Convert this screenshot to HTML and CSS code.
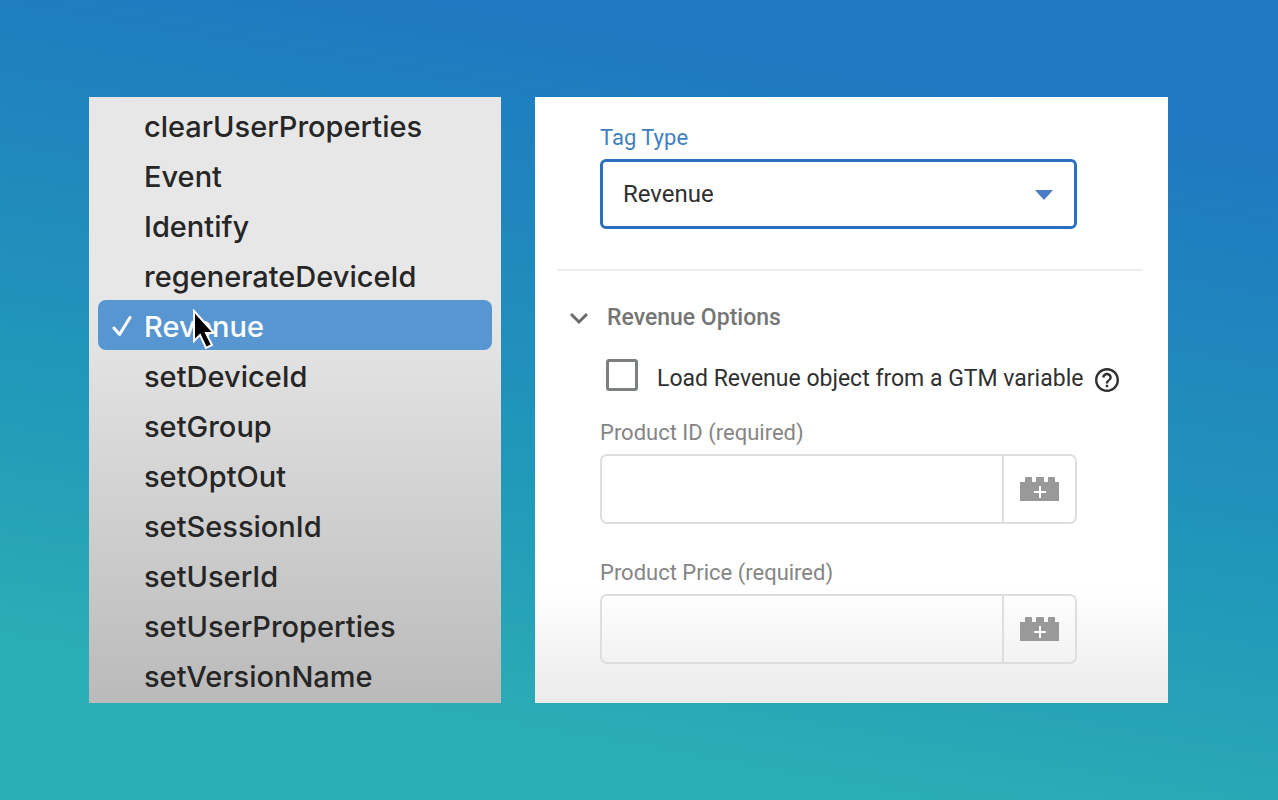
FILE: index.html
```
<!DOCTYPE html>
<html lang="en">
<head>
    <meta charset="UTF-8">
    <meta name="viewport" content="width=device-width, initial-scale=1.0">
    <title>Tag Type: Revenue</title>
    <link rel="stylesheet" href="styles.css">
</head>
<body>
    <main class="stage">
        <ul class="menu">
            <li><button class="menu-item">clearUserProperties</button></li>
            <li><button class="menu-item">Event</button></li>
            <li><button class="menu-item">Identify</button></li>
            <li><button class="menu-item">regenerateDeviceId</button></li>
            <li class="current">
                <button class="menu-item selected">
                    <svg class="check" viewBox="0 0 20 22" aria-hidden="true"><path d="M2 13l5.500 6.500L18 2.500"/></svg>
                    Revenue
                </button>
                <svg class="cursor" viewBox="0 0 24 42" aria-hidden="true"><path d="M2 2v30l6-6 6 13 6-3-6-12h8z"/></svg>
            </li>
            <li><button class="menu-item">setDeviceId</button></li>
            <li><button class="menu-item">setGroup</button></li>
            <li><button class="menu-item">setOptOut</button></li>
            <li><button class="menu-item">setSessionId</button></li>
            <li><button class="menu-item">setUserId</button></li>
            <li><button class="menu-item">setUserProperties</button></li>
            <li><button class="menu-item">setVersionName</button></li>
        </ul>

        <form class="panel">
            <div class="field tag-type">
                <label for="tag-type">Tag Type</label>
                <div class="select-box">
                    <select id="tag-type">
                        <option>clearUserProperties</option>
                        <option>Event</option>
                        <option>Identify</option>
                        <option selected>Revenue</option>
                    </select>
                    <svg class="arrow" viewBox="0 0 18 10" aria-hidden="true"><path d="M0 0h18L9 10z"/></svg>
                </div>
            </div>

            <hr>

            <h2>
                <svg class="chevron" viewBox="0 0 18 12" aria-hidden="true"><path d="M1 2l8 8 8-8"/></svg>
                Revenue Options
            </h2>

            <div class="option">
                <input type="checkbox" id="load-object">
                <label for="load-object">Load Revenue object from a GTM variable</label>
                <button type="button" class="help" aria-label="Help">
                    <svg viewBox="2 2 20 20" aria-hidden="true"><path d="M11 18h2v-2h-2v2zm1-16C6.480 2 2 6.480 2 12s4.480 10 10 10 10-4.480 10-10S17.520 2 12 2zm0 18c-4.410 0-8-3.590-8-8s3.590-8 8-8 8 3.590 8 8-3.590 8-8 8zm0-14c-2.210 0-4 1.790-4 4h2c0-1.100.9-2 2-2s2 .9 2 2c0 2-3 1.750-3 5h2c0-2.250 3-2.500 3-5 0-2.210-1.790-4-4-4z"/></svg>
                </button>
            </div>

            <div class="field">
                <label for="product-id">Product ID (required)</label>
                <div class="input-box">
                    <input type="text" id="product-id">
                    <button type="button" aria-label="Choose a variable for Product ID">
                        <svg class="brick" viewBox="0 0 40 24" aria-hidden="true"><path class="shape" d="M0 5h5V1q0-1 1-1h5q1 0 1 1v4h4V1q0-1 1-1h6q1 0 1 1v4h4V1q0-1 1-1h5q1 0 1 1v4h4v19H0z"/><path class="plus" d="M20 9v12M14 15h12"/></svg>
                    </button>
                </div>
            </div>

            <div class="field">
                <label for="product-price">Product Price (required)</label>
                <div class="input-box">
                    <input type="text" id="product-price">
                    <button type="button" aria-label="Choose a variable for Product Price">
                        <svg class="brick" viewBox="0 0 40 24" aria-hidden="true"><path class="shape" d="M0 5h5V1q0-1 1-1h5q1 0 1 1v4h4V1q0-1 1-1h6q1 0 1 1v4h4V1q0-1 1-1h5q1 0 1 1v4h4v19H0z"/><path class="plus" d="M20 9v12M14 15h12"/></svg>
                    </button>
                </div>
            </div>
        </form>
    </main>
</body>
</html>
```
FILE: styles.css
```
* {
    box-sizing: border-box;
}
body {
    margin: 0;
    min-height: 100vh;
    font-family: Roboto, sans-serif;
    background: linear-gradient(190deg, #1f78c1 14%, #2199b9 60%, #2badb5 84%);
}
button, input, select {
    margin: 0;
    padding: 0;
    border: none;
    background: none;
    font: inherit;
    color: inherit;
}
.stage {
    display: grid;
    grid-template-columns: 412fr 633fr;
    gap: 34px;
    padding: 97px 110px 96px 89px;
}

/* Dropdown list */
.menu {
    margin: 0;
    padding: 3px 9px;
    list-style: none;
    font-family: Inter, sans-serif;
    font-size: 29px;
    font-weight: 500;
    color: #262626;
    background: linear-gradient(#e7e7e7 35%, #d8d8d8 57%, #bababa);
}
.menu-item {
    display: flex;
    align-items: center;
    gap: 12px;
    width: 100%;
    height: 50px;
    padding: 2px 14px 0 46px;
    text-align: left;
}
.menu-item.selected {
    padding-left: 14px;
    color: #fff;
    background: #5896d1;
    border-radius: 8px;
}
.current {
    position: relative;
}
.check {
    width: 20px;
    height: 22px;
    fill: none;
    stroke: #fff;
    stroke-width: 3;
    stroke-linecap: round;
    stroke-linejoin: round;
}
.cursor {
    position: absolute;
    top: 9px;
    left: 94px;
    width: 24px;
    height: 42px;
    fill: #000;
    stroke: #fff;
    stroke-width: 2;
}

/* Tag settings */
.panel {
    padding: 27px 25px 39px 22px;
    color: #303030;
    font-size: 24px;
    background: linear-gradient(#fff 81%, #ebebeb);
}
.field {
    margin: 0 66px 35px 43px;
}
.field:last-child {
    margin-bottom: 0;
}
.field label {
    display: block;
    margin-bottom: 7px;
    font-size: 22px;
    line-height: 28px;
    color: #858585;
}
.tag-type {
    margin-bottom: 40px;
}
.tag-type label {
    color: #3f80c0;
}
.select-box {
    position: relative;
}
.select-box select {
    display: block;
    width: 100%;
    height: 70px;
    padding: 0 60px 0 20px;
    appearance: none;
    border: 3px solid #2a70bd;
    border-radius: 6px;
}
.arrow {
    position: absolute;
    top: 31px;
    right: 24px;
    width: 18px;
    height: 10px;
    fill: #4b7cc4;
    pointer-events: none;
}
hr {
    width: 100%;
    height: 2px;
    margin: 0;
    border: none;
    background: #ededed;
}
h2 {
    display: flex;
    align-items: center;
    gap: 19px;
    margin: 33px 0 27px 13px;
    font-size: 23px;
    font-weight: 500;
    line-height: 28px;
    color: #757575;
}
.chevron {
    width: 18px;
    height: 12px;
    fill: none;
    stroke: #6b6b6b;
    stroke-width: 3;
}
.option {
    display: flex;
    align-items: center;
    height: 32px;
    margin: 0 0 28px 49px;
}
.option input {
    width: 32px;
    height: 32px;
    margin-right: 19px;
    appearance: none;
    border: 3px solid #7d8080;
    border-radius: 3px;
}
.option label {
    padding-top: 6px;
    font-size: 23px;
    white-space: nowrap;
}
.help {
    width: 24px;
    height: 24px;
    margin: 10px 0 0 12px;
}
.help svg {
    display: block;
    fill: #303030;
}
.input-box {
    display: flex;
    height: 70px;
    border: 2px solid #dedede;
    border-radius: 7px;
}
.input-box input {
    flex: 1;
    min-width: 0;
    padding: 0 20px;
}
.input-box button {
    display: flex;
    align-items: center;
    justify-content: center;
    width: 73px;
    border-left: 2px solid #dedede;
}
.brick {
    width: 40px;
    height: 24px;
}
.brick .shape {
    fill: #999;
}
.brick .plus {
    fill: none;
    stroke: #fff;
    stroke-width: 2;
}
```
